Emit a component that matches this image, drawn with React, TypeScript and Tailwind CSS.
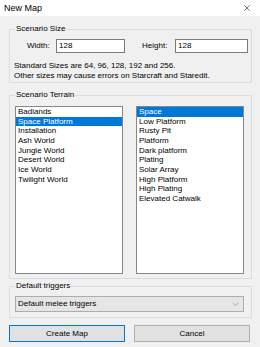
import { ChevronDown, X } from "lucide-react";

const leftItems = [
  "Badlands",
  "Space Platform",
  "Installation",
  "Ash World",
  "Jungle World",
  "Desert World",
  "Ice World",
  "Twilight World",
];

const rightItems = [
  "Space",
  "Low Platform",
  "Rusty Pit",
  "Platform",
  "Dark platform",
  "Plating",
  "Solar Array",
  "High Platform",
  "High Plating",
  "Elevated Catwalk",
];

function ListBox({ items, selected }: { items: string[]; selected: string }) {
  return (
    <div className="w-[108px] h-[168px] bg-white border border-[#828790] flex flex-col">
      {items.map((item) => (
        <div
          key={item}
          className={
            item === selected
              ? "h-[9.67px] leading-[9.67px] pl-[2px] bg-[#0078d7] text-white"
              : "h-[9.67px] leading-[9.67px] pl-[2px] text-black"
          }
        >
          {item}
        </div>
      ))}
    </div>
  );
}

export default function App() {
  return (
    <div className="w-[260px] h-[347px] bg-[#f0f0f0] flex flex-col font-['Liberation_Sans',Arial,sans-serif] text-[8px] text-black overflow-hidden">
      {/* Title bar */}
      <div className="h-[16px] bg-white flex items-center justify-between pl-[4px] pr-[8px]">
        <span className="text-[9px] leading-none">New Map</span>
        <X size={10} strokeWidth={1.3} className="text-black" />
      </div>

      <div className="flex flex-col pl-[9px] pr-[8px] pt-[8px]">
        {/* Scenario Size */}
        <fieldset className="border border-[#dcdcdc] pt-[5px] pb-[1px]">
          <legend className="ml-[5px] px-[1px] leading-[10px]">Scenario Size</legend>
          <div className="flex items-center h-[14px] pl-[17px]">
            <span className="w-[29px]">Width:</span>
            <div className="w-[69px] h-[14px] bg-white border border-[#7a7a7a] flex items-center pl-[2px]">128</div>
            <span className="ml-[17px] w-[33px]">Height:</span>
            <div className="w-[73px] h-[14px] bg-white border border-[#7a7a7a] flex items-center pl-[2px]">128</div>
          </div>
          <div className="mt-[8px] pl-[4px] leading-[10px]">
            <div>Standard Sizes are 64, 96, 128, 192 and 256.</div>
            <div>Other sizes may cause errors on Starcraft and Staredit.</div>
          </div>
        </fieldset>

        {/* Scenario Terrain */}
        <fieldset className="mt-[7px] border border-[#dcdcdc] pt-[6px] pb-[4px] pl-[5px] pr-[7px]">
          <legend className="ml-[0px] px-[1px] leading-[10px]">Scenario Terrain</legend>
          <div className="flex gap-[13px]">
            <ListBox items={leftItems} selected="Space Platform" />
            <ListBox items={rightItems} selected="Space" />
          </div>
        </fieldset>

        {/* Default triggers */}
        <fieldset className="mt-[2px] border border-[#dcdcdc] pt-[5px] pb-[5px] pl-[5px] pr-[7px]">
          <legend className="ml-[0px] px-[1px] leading-[10px]">Default triggers</legend>
          <div className="h-[16px] bg-[#e5e5e5] border border-[#adadad] flex items-center justify-between pl-[2px] pr-[3px]">
            <span>Default melee triggers</span>
            <ChevronDown size={9} strokeWidth={1.2} className="text-[#606060]" />
          </div>
        </fieldset>

        {/* Buttons */}
        <div className="mt-[7px] flex gap-[9px]">
          <button className="w-[116px] h-[17px] bg-[#e1e1e1] border border-[#0078d7] text-[8px]">Create Map</button>
          <button className="w-[116px] h-[17px] bg-[#e1e1e1] border border-[#adadad] text-[8px]">Cancel</button>
        </div>
      </div>
    </div>
  );
}
